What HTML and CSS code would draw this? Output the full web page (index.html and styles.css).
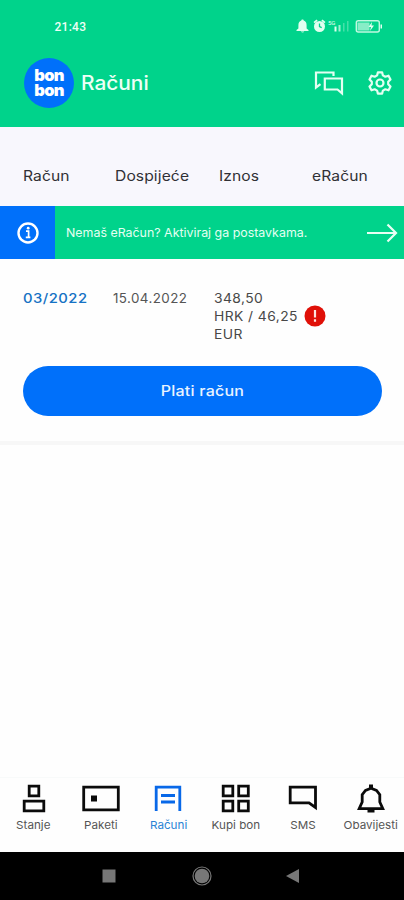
FILE: index.html
```
<!DOCTYPE html>
<html lang="hr">
<head>
<meta charset="utf-8">
<meta name="viewport" content="width=device-width, initial-scale=1">
<title>Računi</title>
<link rel="stylesheet" href="styles.css">
</head>
<body>
<header class="header">
  <div class="status">
    <span class="clock">21:43</span>
    <svg class="status-icons" width="90" height="16" viewBox="0 0 90 16">
      <g fill="#e2fff0">
        <path d="M6.500 .5c.8 0 1.200.5 1.200 1.100C9.800 2.200 10.600 4 10.600 6.200v3.300l1.900 1.600v1H.5v-1l1.900-1.600V6.200C2.400 4 3.300 2.200 5.300 1.600 5.300 1 5.700.5 6.500.5zM4.800 12.600h3.400c-.3 1.200-3.100 1.200-3.400 0z"/>
        <circle cx="23.500" cy="7.500" r="5.500"/>
        <path d="M17.500 3l3-2.500 1.200 1.200-3 2.600zM29.500 3l-3-2.500-1.200 1.200 3 2.600z"/>
        <rect x="38.500" y="7.500" width="2" height="5"/><rect x="42.500" y="6" width="2" height="6.500" opacity=".7"/>
        <rect x="47" y="4" width="1.500" height="8.500" opacity=".3"/><rect x="51" y="2" width="1.500" height="10.500" opacity=".3"/>
        <rect x="61.500" y="3.500" width="12" height="8" opacity=".6"/>
        <rect x="84.500" y="5.500" width="1.500" height="4"/>
      </g>
      <path d="M23.500 4.500v3.200l2.200 1" fill="none" stroke="#00d38b" stroke-width="1.300"/>
      <rect x="60.300" y="1.800" width="23" height="11.200" rx="2" fill="none" stroke="#e2fff0" stroke-width="1.400" opacity=".85"/>
      <path d="M76 3l-3.500 5h2.500l-1 4 4-5.500h-2.500z" fill="#e2fff0"/>
      <text class="net" x="32" y="5.500">5G</text>
    </svg>
  </div>
  <div class="titlebar">
    <div class="logo"><span>bon</span><span>bon</span></div>
    <h1 class="title">Računi</h1>
    <svg class="chat" width="30" height="26" viewBox="0 0 30 26" fill="none" stroke="#e4fff2" stroke-width="2.200">
      <path d="M6.500 14.200L2 17.500V2.500H19.500V6"/>
      <path d="M10.800 8.500H28V23.300L23.500 19.500H10.800Z"/>
    </svg>
    <svg class="gear" width="26" height="26" viewBox="0 0 26 26" fill="none" stroke="#e4fff2" stroke-width="2.200" stroke-linejoin="round">
      <path d="M10.900 2.300H15.100L15.900 5.400L18.300 6.700L21.500 5.700L23.500 9.400L21.200 11.700V14.300L23.500 16.600L21.500 20.300L18.300 19.300L15.900 20.600L15.100 23.700H10.900L10.100 20.600L7.700 19.300L4.500 20.300L2.500 16.600L4.800 14.300V11.700L2.500 9.400L4.500 5.700L7.700 6.700L10.100 5.400Z"/>
      <circle cx="13" cy="13" r="3.500"/>
    </svg>
  </div>
</header>
<main class="main">
  <div class="columns head">
    <span>Račun</span><span>Dospijeće</span><span>Iznos</span><span>eRačun</span>
  </div>
  <div class="banner">
    <div class="info">
      <svg width="24" height="24" viewBox="0 0 24 24"><circle cx="12" cy="12" r="9.500" fill="none" stroke="#fff" stroke-width="2.400"/><path d="M10 10.200h2.600v6M9.800 16.300h4.600" fill="none" stroke="#fff" stroke-width="1.700"/><circle cx="12.200" cy="7.200" r="1.400" fill="#fff"/></svg>
    </div>
    <p class="notice">Nemaš eRačun? Aktiviraj ga postavkama.</p>
    <svg class="arrow" width="32" height="20" viewBox="0 0 32 20" fill="none" stroke="#e8fff4" stroke-width="2.200"><path d="M1 10H30M21.500 1.500L30 10L21.500 18.500"/></svg>
  </div>
  <section class="bill">
    <div class="row">
      <a class="period"><span class="wide">03/2022</span></a>
      <span class="due">15.04.2022</span>
      <span class="amount">348,50<br>HRK / 46,25<br>EUR</span>
      <svg class="alert" width="22" height="22" viewBox="0 0 22 22"><circle cx="11" cy="11" r="10.500" fill="#e01008"/><path d="M11 5v7.500M11 14.300v2.500" stroke="#ffe4df" stroke-width="2.200"/></svg>
    </div>
    <button class="pay"><span class="pay-label">Plati račun</span></button>
  </section>
</main>
<nav class="tabs">
  <a class="tab"><svg width="40" height="30" viewBox="0 0 40 30"><path d="M15.200 2.200h9.600v9.600h-9.600zM10.200 17.200h19.600v9.600H10.200z"/></svg><span>Stanje</span></a>
  <a class="tab"><svg width="40" height="30" viewBox="0 0 40 30"><path d="M2.700 3.200h34.600v22.600H2.700z"/><path class="fill" d="M10 11.500h6v6h-6z"/></svg><span>Paketi</span></a>
  <a class="tab active"><svg width="40" height="30" viewBox="0 0 40 30"><path d="M8.200 27V3.200h23.600V27M13 11.500h14M13 18h14"/></svg><span>Računi</span></a>
  <a class="tab"><svg width="40" height="30" viewBox="0 0 40 30"><path d="M7.200 2.200h9.600v9.600H7.200zM22.700 2.200h9.600v9.600h-9.600zM7.200 17.200h9.600v9.600H7.200zM22.700 17.200h9.600v9.600h-9.600z"/></svg><span>Kupi bon</span></a>
  <a class="tab"><svg width="40" height="30" viewBox="0 0 40 30"><path d="M7.200 3.200h25.300v20.300l-6.500-4.700H7.200z"/></svg><span>SMS</span></a>
  <a class="tab"><svg width="40" height="30" viewBox="0 0 40 30"><path d="M20 4.300l-5.500 2.200-3.300 4.200V18l-3 6.700h23.600l-3-6.700v-7.300l-3.300-4.200z"/><path class="fill" d="M18 .5h4V4h-4zM16.500 25h7v3.500h-7z"/></svg><span>Obavijesti</span></a>
</nav>
<footer class="system">
  <svg width="404" height="48" viewBox="0 0 404 48">
    <rect x="102.500" y="17.500" width="13" height="13" fill="#777"/>
    <circle cx="202" cy="24" r="7.300" fill="#777"/><circle cx="202" cy="24" r="9" fill="none" stroke="#777" stroke-width="1.200"/>
    <path d="M286 24L299 17V31Z" fill="#777"/>
  </svg>
</footer>
</body>
</html>
```
FILE: styles.css
```
* { box-sizing: border-box; }
body {
  margin: 0;
  height: 900px;
  display: flex;
  flex-direction: column;
  overflow: hidden;
  background: #fefefe;
  color: #333;
  font-family: Inter, "Liberation Sans", sans-serif;
}
.header { height: 127px; background: #00d38b; color: #edfff6; }
.status {
  height: 54px;
  padding: 0 18px 0 54.5px;
  display: flex;
  align-items: center;
  justify-content: space-between;
}
.clock { font: 500 12px Roboto, sans-serif; letter-spacing: .25px; }
.net { font: 6px Roboto, sans-serif; fill: #e2fff0; }
.titlebar { height: 58px; padding: 0 11px 0 24px; display: flex; align-items: center; }
.logo {
  width: 50px;
  height: 50px;
  border-radius: 50%;
  background: #0070fa;
  color: #fff;
  display: flex;
  flex-direction: column;
  align-items: center;
  justify-content: center;
  font-size: 16.5px;
  font-weight: 900;
  line-height: 15px;
  letter-spacing: -.7px;
}
.title { margin: 0 auto 0 6.5px; font-size: 19.5px; line-height: 24px; font-weight: 500; transform: scaleX(1.07); transform-origin: left; }
.chat { margin-right: 23px; }
.columns {
  display: grid;
  grid-template-columns: 92px 104px 93px 1fr;
  padding-left: 23px;
}
.head {
  height: 79px;
  padding-top: 39px;
  background: #f8f7fd;
  color: #303035;
  font-size: 14px;
  line-height: 20px;
  letter-spacing: .1px;
}
.head span { justify-self: start; transform: scaleX(1.115); transform-origin: left; }
.banner { height: 53px; background: #00d38b; display: flex; align-items: center; padding-right: 6px; }
.info { width: 55px; height: 53px; background: #0070fa; display: grid; place-items: center; }
.notice { margin: 0 auto 0 10.5px; color: #e4fff2; font-size: 12px; line-height: 18px; transform: scaleX(1.033); transform-origin: left; }
.bill { height: 186px; padding: 30px 22px 0 23px; border-bottom: 4px solid #f7f7f7; }
.row { height: 77px; display: flex; align-items: flex-start; font-size: 13px; line-height: 18px; letter-spacing: .4px; color: #555; }
.period { width: 90px; color: #1672c4; font-weight: 500; }
.wide { display: inline-block; transform: scaleX(1.14); transform-origin: left; }
.due { width: 101px; transform: scaleX(1.03); transform-origin: left; }
.amount { width: 90px; color: #484848; transform: scaleX(1.065); transform-origin: left; }
.alert { margin-top: 16px; }
.pay {
  display: block;
  width: 359px;
  height: 50px;
  padding: 0 0 2px;
  border: 0;
  border-radius: 25px;
  background: #0070fa;
  color: #e9f4ff;
  font: 500 14px Inter, sans-serif;
  letter-spacing: .2px;
}
.pay-label { display: inline-block; transform: scaleX(1.145); }
.tabs {
  height: 75px;
  margin-top: auto;
  border-top: 1px solid #f8fafa;
  display: grid;
  grid-template-columns: repeat(6, 67.4px);
  padding-top: 6px;
}
.tab { display: flex; flex-direction: column; align-items: center; color: #555; font-size: 11px; line-height: 14px; white-space: nowrap; }
.tab span { margin-top: 4px; transform: scaleX(1.06); }
.tab path { fill: none; stroke: #0b0b0b; stroke-width: 2.800; }
.tab .fill { fill: #0b0b0b; stroke: none; }
.tab.active { color: #2a83d5; }
.tab.active path { stroke: #0868e8; }
.system { height: 48px; background: #000; }
.system svg { display: block; }
```
